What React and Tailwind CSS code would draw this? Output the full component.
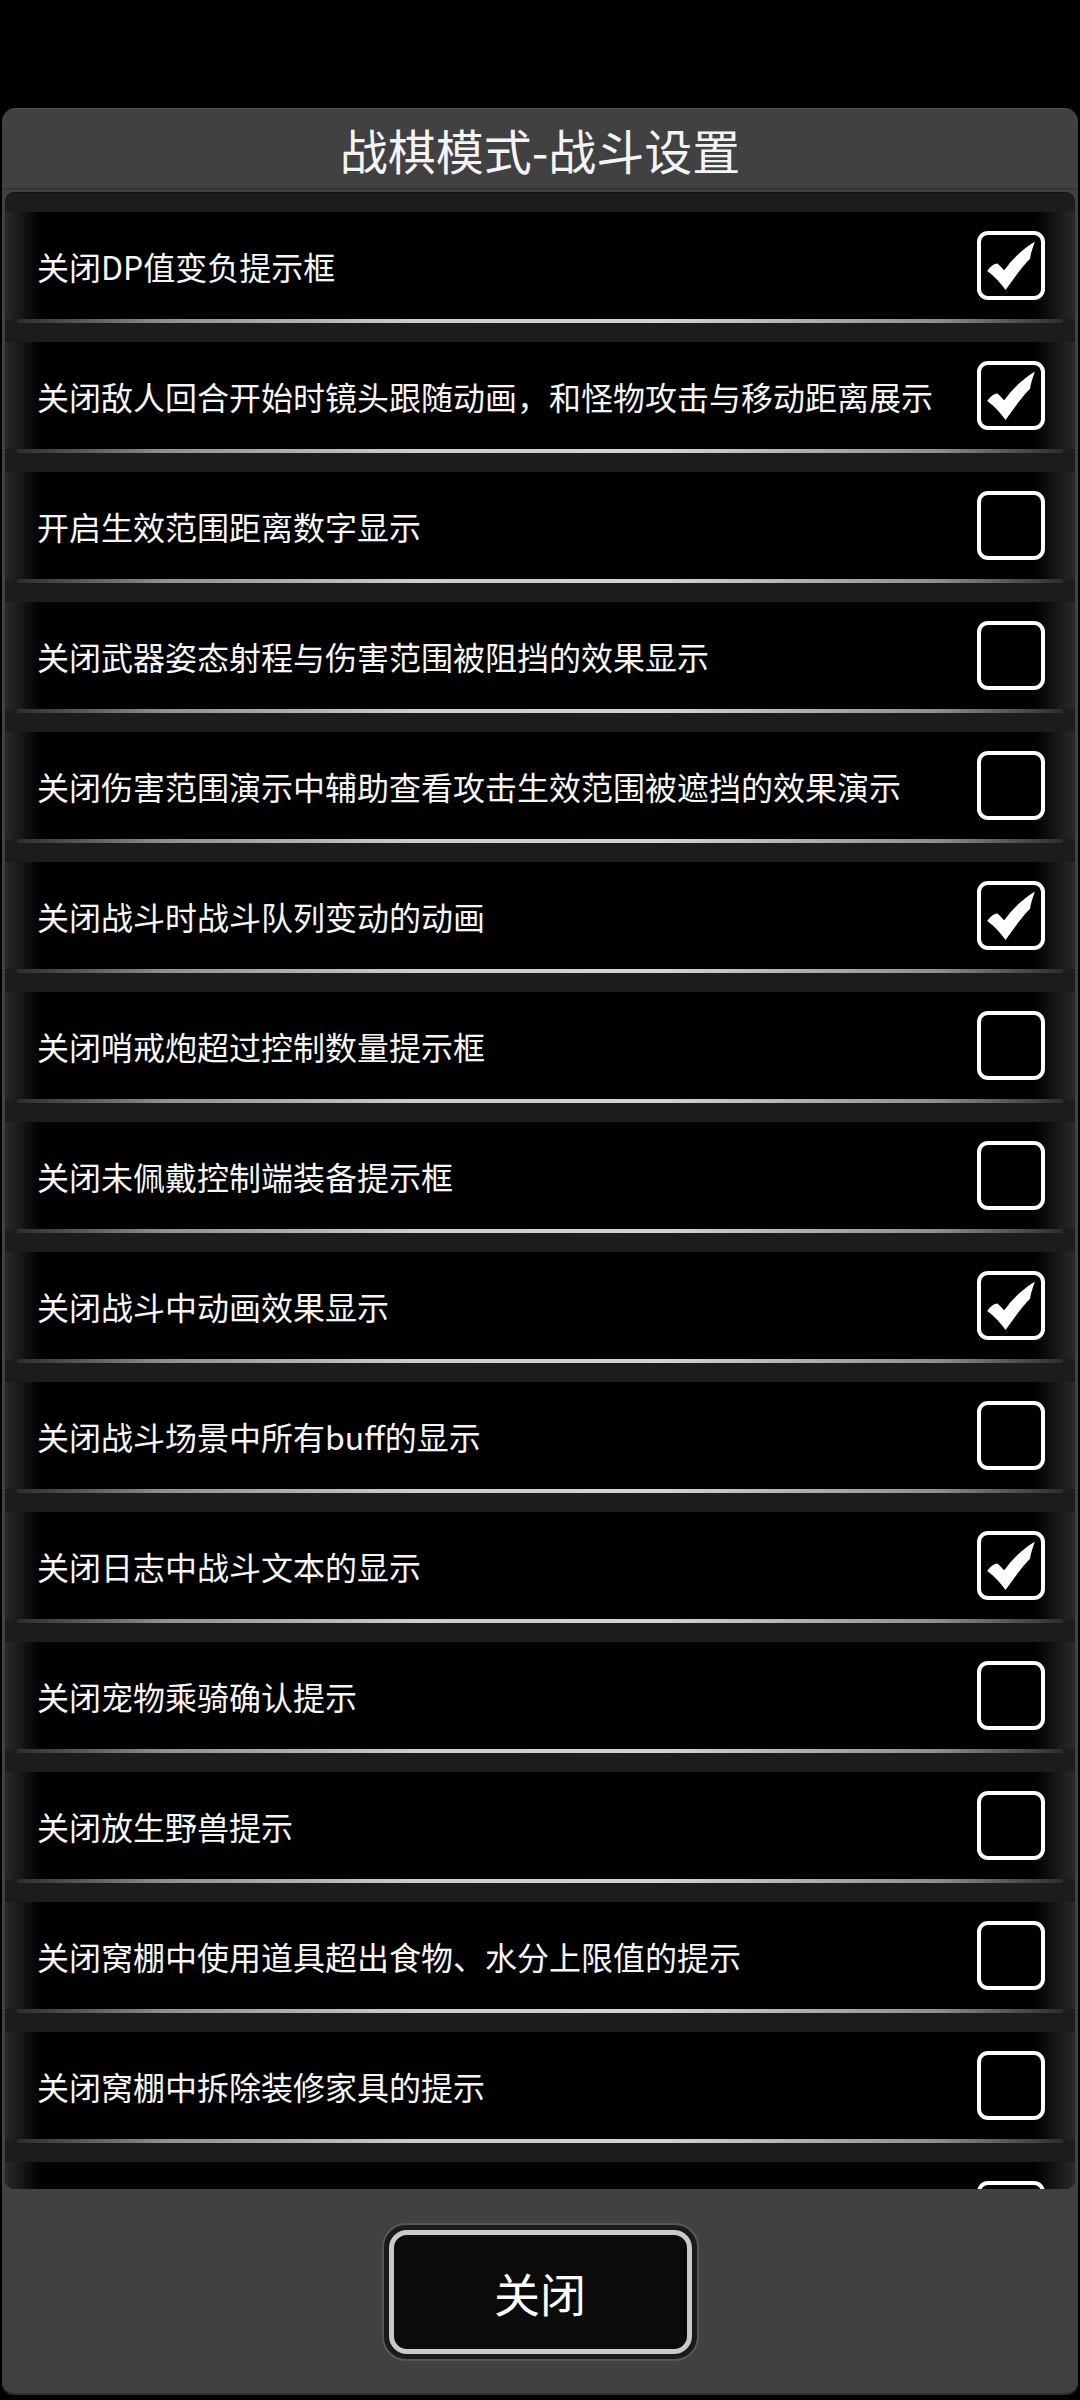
import { useState } from 'react'

const font = { fontFamily: '"Noto Sans CJK SC", "Noto Sans", sans-serif' }

const initialRows = [
  { label: '关闭DP值变负提示框', on: true },
  { label: '关闭敌人回合开始时镜头跟随动画，和怪物攻击与移动距离展示', on: true },
  { label: '开启生效范围距离数字显示', on: false },
  { label: '关闭武器姿态射程与伤害范围被阻挡的效果显示', on: false },
  { label: '关闭伤害范围演示中辅助查看攻击生效范围被遮挡的效果演示', on: false },
  { label: '关闭战斗时战斗队列变动的动画', on: true },
  { label: '关闭哨戒炮超过控制数量提示框', on: false },
  { label: '关闭未佩戴控制端装备提示框', on: false },
  { label: '关闭战斗中动画效果显示', on: true },
  { label: '关闭战斗场景中所有buff的显示', on: false },
  { label: '关闭日志中战斗文本的显示', on: true },
  { label: '关闭宠物乘骑确认提示', on: false },
  { label: '关闭放生野兽提示', on: false },
  { label: '关闭窝棚中使用道具超出食物、水分上限值的提示', on: false },
  { label: '关闭窝棚中拆除装修家具的提示', on: false },
  { label: '', on: false },
]

// brush style check, drawn over the whole box
function Check() {
  return (
    <svg viewBox="0 0 100 100" className="absolute inset-[-4px] w-[68px] h-[69px]">
      <path
        d="M15 58 C20 51 25 47 30 47 C34 50 37 54 40 57 C52 40 68 25 85 15 C82 24 79 32 78 40 C66 52 55 68 42 86 C35 76 26 66 15 58 Z"
        fill="#ffffff"
      />
    </svg>
  )
}

export default function App() {
  const [rows, setRows] = useState(initialRows)
  const toggle = i => setRows(r => r.map((x, j) => (j === i ? { ...x, on: !x.on } : x)))

  return (
    <div className="min-h-screen bg-black pt-[108px] px-[2px]" style={font}>
      <div className="h-[2287px] flex flex-col rounded-t-[14px] rounded-b-[12px] bg-[#414141] border-t border-[#4e4e4e] border-b-2 border-b-[#2e2e2e] overflow-hidden">
        <div className="h-[81px] shrink-0 flex items-center justify-center text-[48px] leading-none text-[#f4f4f4] border-b-2 border-[#353535]">
          战棋模式-战斗设置
        </div>

        <div className="mt-[2px] mx-[3px] h-[1997px] shrink-0 rounded-[9px] bg-[#1c1c1c] border-t border-[#141414] overflow-hidden pt-[19px] flex flex-col gap-[19px]">
          {rows.map((row, i) => (
            <div key={i} className="shrink-0">
              <div className="h-[107px] flex items-center justify-between pl-[32px] pr-[30px] bg-[linear-gradient(to_right,#2a2a2a_0px,#000_36px,#000_calc(100%-40px),#2a2a2a_100%)]">
                <span className="text-[32px] text-[#f6f6f6] leading-none whitespace-nowrap">{row.label}</span>
                <button
                  onClick={() => toggle(i)}
                  className="relative w-[68px] h-[69px] shrink-0 rounded-[11px] border-[4px] border-white bg-black"
                >
                  {row.on && <Check />}
                </button>
              </div>
              <div className="h-[4px] mx-[12px] bg-[linear-gradient(to_right,#2c2c2c,#8f8f8f_14%,#cdcdcd_38%,#d2d2d2_62%,#8f8f8f_88%,#2c2c2c)]" />
            </div>
          ))}
        </div>

        <div className="flex-1 flex justify-center pt-[34px]">
          <div className="w-[317px] h-[138px] rounded-[24px] bg-[#1a1a1a] border-2 border-[#575757] p-[5px]">
            <button className="w-full h-full rounded-[18px] border-[5px] border-[#c9c9c9] bg-[#0b0b0b] flex items-center justify-center text-[46px] text-white leading-none">
              关闭
            </button>
          </div>
        </div>
      </div>
    </div>
  )
}
